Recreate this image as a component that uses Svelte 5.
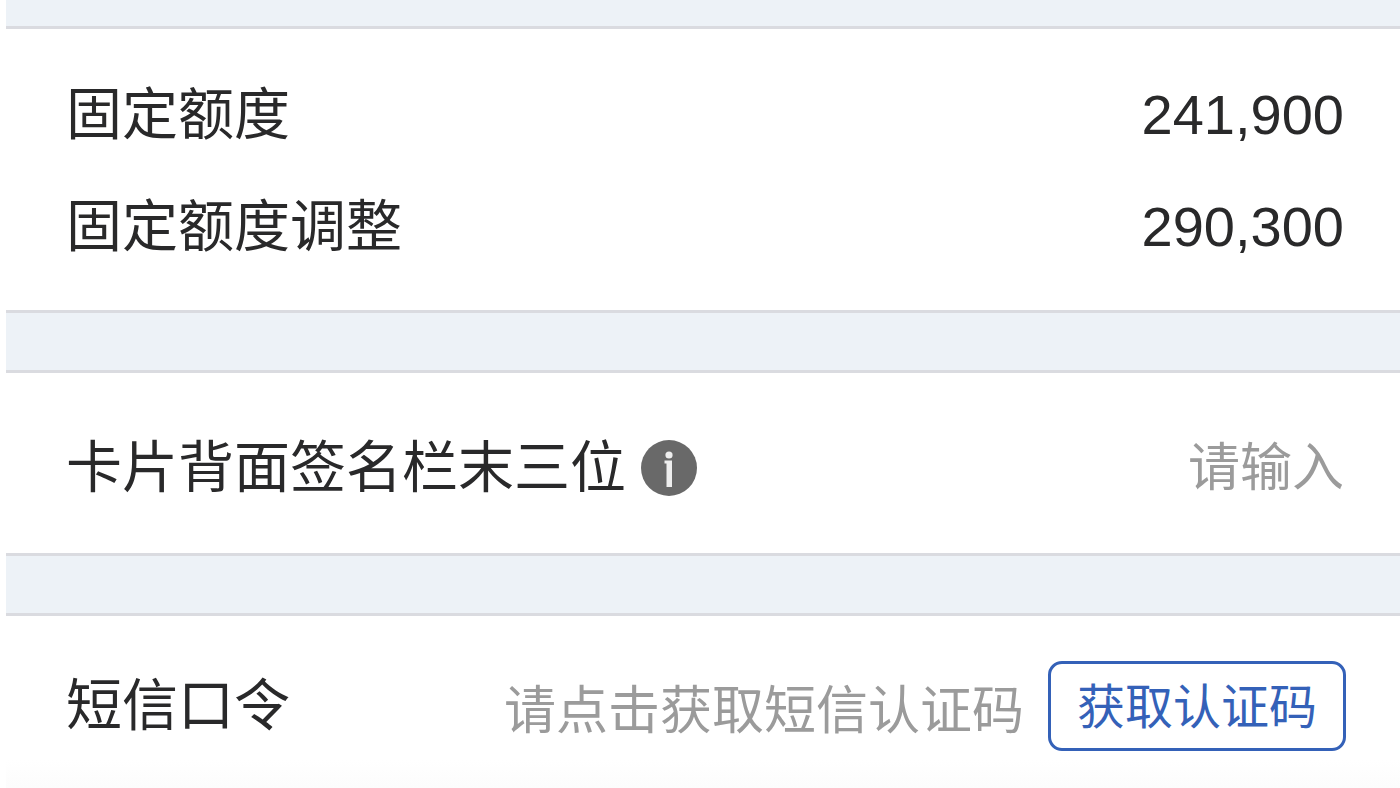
<script>
  const limits = [
    { label: '固定额度', value: '241,900' },
    { label: '固定额度调整', value: '290,300' }
  ];
  let digits = $state('');
  let code = $state('');
</script>

<main>
  <section class="limits">
    <dl>
      {#each limits as item}
        <div class="row">
          <dt>{item.label}</dt>
          <dd>{item.value}</dd>
        </div>
      {/each}
    </dl>
  </section>

  <section class="field card">
    <label for="digits">卡片背面签名栏末三位</label>
    <button class="info" type="button" aria-label="说明">
      <svg viewBox="0 0 56 56" aria-hidden="true">
        <circle cx="28" cy="28" r="28" fill="#696969" />
        <circle cx="28" cy="15" r="3.6" fill="#eee" />
        <path d="M23.5 20.5H31V47h-5.5V23.5h-2z" fill="#eee" />
      </svg>
    </button>
    <input id="digits" placeholder="请输入" bind:value={digits} />
  </section>

  <section class="field sms">
    <label for="code">短信口令</label>
    <input id="code" placeholder="请点击获取短信认证码" bind:value={code} />
    <button class="send" type="button">获取认证码</button>
  </section>
</main>

<style>
  :global(body) {
    background: #fff;
  }

  main {
    display: flex;
    flex-direction: column;
    gap: 57px;
    margin-left: 6px;
    padding-top: 26px;
    background: #edf2f7;
    color: #29292a;
    font-family: "Liberation Sans", "Noto Sans CJK SC", sans-serif;
    font-size: 56px;
    line-height: 80px;
  }

  section {
    background: #fff;
    border: solid #dadbe0;
    border-width: 3px 0;
    padding: 0 56px 0 60px;
  }

  .limits {
    padding-top: 46px;
    padding-bottom: 43px;
  }

  dl {
    display: flex;
    flex-direction: column;
    gap: 32px;
    margin: 0;
  }

  .row {
    display: flex;
    justify-content: space-between;
  }

  dd {
    margin: 0;
  }

  .field {
    display: flex;
    align-items: center;
    min-height: 180px;
  }

  .card {
    min-height: 170px;
    padding-top: 10px;
  }

  .sms {
    border-bottom: 0;
    padding-right: 54px;
    background: linear-gradient(#fff 80%, #fbfbfb);
  }

  input {
    flex: 1;
    min-width: 0;
    height: 80px;
    padding: 0;
    border: 0;
    outline: 0;
    background: none;
    color: inherit;
    font: inherit;
    font-size: 52px;
    text-align: right;
  }

  .sms input {
    padding-top: 10px;
  }

  input::placeholder {
    color: #9b9b9b;
    opacity: 1;
  }

  button {
    font: inherit;
    cursor: pointer;
  }

  .info {
    width: 56px;
    height: 56px;
    margin-left: 15px;
    padding: 0;
    border: 0;
    background: none;
  }

  .info svg {
    display: block;
  }

  .send {
    flex: none;
    height: 90px;
    margin-left: 24px;
    padding: 4px 26px 0;
    border: 3px solid #3461b8;
    border-radius: 14px;
    background: #fff;
    color: #3461b8;
    font-size: 48px;
    line-height: 80px;
  }
</style>
